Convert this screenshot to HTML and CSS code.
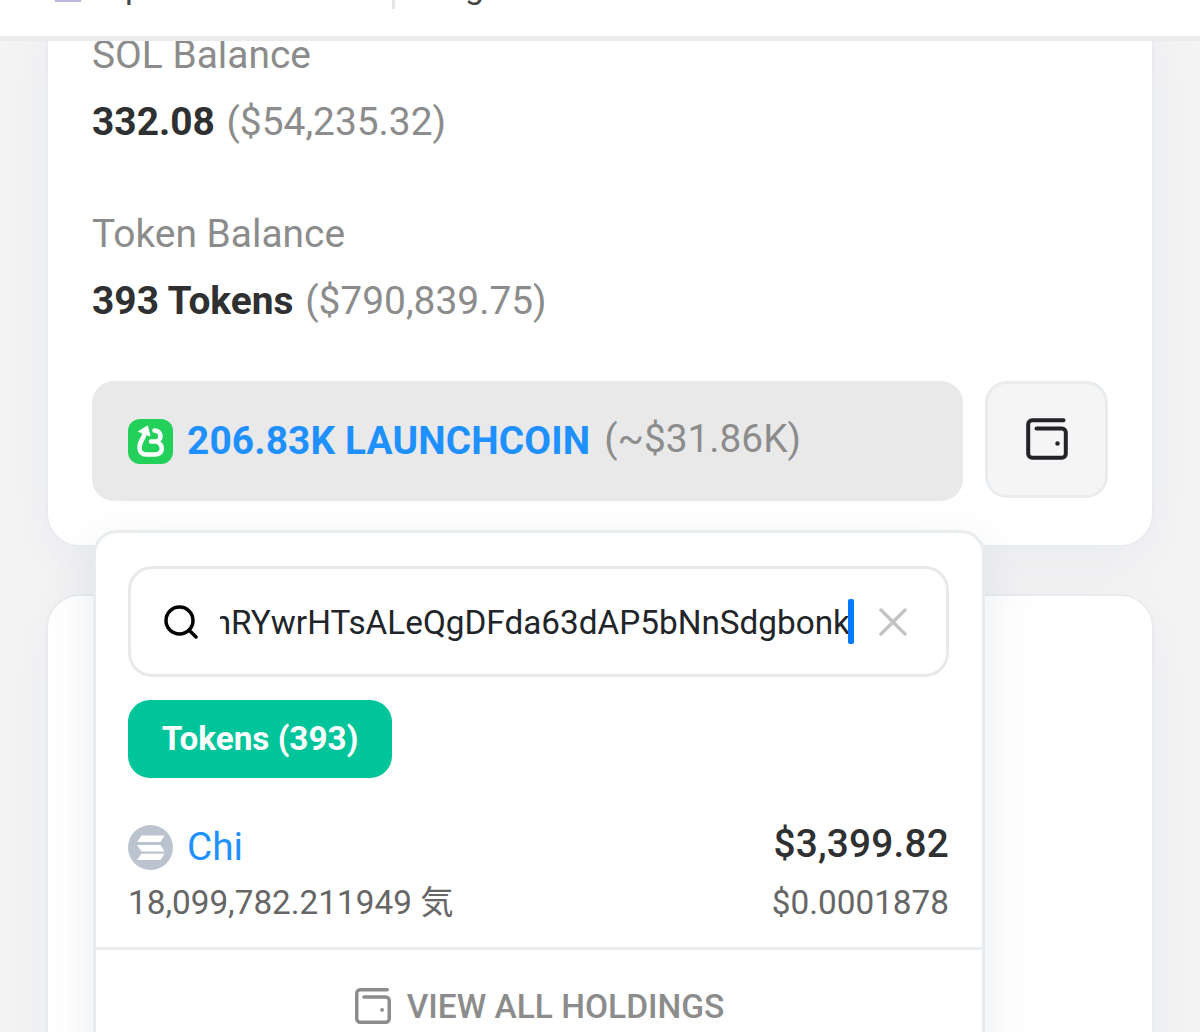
FILE: index.html
```html
<!DOCTYPE html>
<html lang="en">
<head>
    <meta charset="UTF-8">
    <meta name="viewport" content="width=device-width, initial-scale=1.0">
    <title>Account</title>
    <link rel="stylesheet" href="styles.css">
</head>
<body>
    <svg width="0" height="0" class="defs">
        <symbol id="wallet" viewBox="0 0 44 44">
            <path d="M38.5 3.2H7.2a4 4 0 0 0-4 4v29.6a4 4 0 0 0 4 4h29.6a4 4 0 0 0 4-4V15.500a4 4 0 0 0-4-4H11.500" fill="none" stroke="currentColor" stroke-width="4" stroke-linecap="round"/>
            <circle cx="32.500" cy="26.500" r="2.200" fill="currentColor"/>
        </symbol>
    </svg>

    <header class="topbar">
        <span class="topbar-logo"></span>
        <span class="topbar-text">p</span>
        <span class="topbar-line"></span>
        <span class="topbar-text">g</span>
    </header>

    <main class="page">
        <section class="card overview">
            <h4 class="label">SOL Balance</h4>
            <p class="value"><b>332.08</b> <span>($54,235.32)</span></p>
            <h4 class="label">Token Balance</h4>
            <p class="value"><b>393 Tokens</b> <span>($790,839.75)</span></p>

            <div class="holdings">
                <button class="token-select">
                    <svg class="token-logo" viewBox="0 0 45 45">
                        <rect width="45" height="45" rx="12" fill="#22d05a"/>
                        <path d="M16.500 15C16 19 11.500 22 11.500 28.500C11.500 33 14 35.500 18 35.500H27C35.500 35.500 36 26 28.500 22.500H23M28.500 22.500C34.500 21 33.500 11.500 26.500 11.500" fill="none" stroke="#fff" stroke-width="4.6" stroke-linecap="round" stroke-linejoin="round"/>
                        <path d="M10.500 12.500L19.500 7l2.500 10z" fill="#fff" stroke="#fff" stroke-linejoin="round"/>
                    </svg>
                    <b>206.83K LAUNCHCOIN</b>
                    <span>(~$31.86K)</span>
                </button>
                <button class="wallet-btn"><svg class="wallet-icon"><use href="#wallet"/></svg></button>
            </div>

            <div class="dropdown">
                <div class="dropdown-body">
                    <div class="search">
                        <svg class="search-icon" viewBox="0 0 34 34">
                            <circle cx="15.500" cy="15.500" r="13.500"/>
                            <path d="M25 25l7 7"/>
                        </svg>
                        <div class="search-text"><span>nRYwrHTsALeQgDFda63dAP5bNnSdgbonk</span></div>
                        <i class="caret"></i>
                        <svg class="clear-icon" viewBox="0 0 28 28"><path d="M2 2l24 24M26 2L2 26"/></svg>
                    </div>
                    <button class="tab">Tokens (393)</button>
                    <div class="row">
                        <div>
                            <a class="token-name">
                                <svg viewBox="0 0 45 45">
                                    <circle cx="22.500" cy="22.500" r="22.500" fill="#bbc3cf"/>
                                    <path d="M13.500 10.500H36.500l-4 6.500H9zM9 20h23.500l4 6.500H13.500zM13.500 28.800H36.500l-4 6.200H9z" fill="#fff"/>
                                </svg>
                                <span>Chi</span>
                            </a>
                            <div class="amount">18,099,782.211949 気</div>
                        </div>
                        <div class="right">
                            <div class="total">$3,399.82</div>
                            <div class="amount price">$0.0001878</div>
                        </div>
                    </div>
                </div>
                <a class="view-all"><svg><use href="#wallet"/></svg><span>VIEW ALL HOLDINGS</span></a>
            </div>
        </section>

        <section class="card more"></section>
    </main>
</body>
</html>
```
FILE: styles.css
```css
* {
    box-sizing: border-box;
}

body {
    margin: 0;
    height: 1032px;
    overflow: hidden;
    background-color: #f4f4f5;
    color: #2f3031;
    font-family: Roboto, "Noto Sans CJK JP", sans-serif;
}

button {
    font-family: inherit;
    border: none;
}

.defs {
    display: block;
}

/* top bar */
.topbar {
    position: relative;
    z-index: 2;
    display: flex;
    height: 91px;
    margin-top: -50px;
    padding-left: 55px;
    background-color: #fff;
    border-bottom: 5px solid #e9ebed;
}

.topbar-logo {
    width: 26px;
    height: 26px;
    margin: 26px 44px 0 0;
    background-color: #bdb5df;
}

.topbar-text {
    font-size: 34px;
    line-height: 40px;
    padding-top: 16px;
    color: #444;
}

.topbar-line {
    width: 3px;
    height: 50px;
    margin: 9px 70px 0 248px;
    background-color: #e3e5e8;
}

/* cards */
.page {
    padding: 0 46px;
    margin-top: -41px;
}

.card {
    background-color: #fff;
    border: 2px solid #e9ecef;
    border-radius: 34px;
    box-shadow: 0 16px 48px rgba(189, 197, 209, 0.17);
}

.overview {
    position: relative;
    z-index: 1;
    height: 547px;
    padding: 30px 44px 0 44px;
}

.label {
    margin: 0;
    font-size: 38.9px;
    line-height: 46px;
    font-weight: 400;
    color: #8c8c8c;
}

.value {
    margin: 21px 0 66px;
    font-size: 38.9px;
    line-height: 46px;
    white-space: nowrap;
}

.value span {
    margin-left: 2px;
    color: #8c8c8c;
}

.holdings {
    display: flex;
    gap: 22px;
    margin-top: -9.5px;
}

.token-select {
    display: flex;
    align-items: center;
    width: 871px;
    height: 120px;
    padding: 2px 36px 0;
    font-size: 38.8px;
    color: #8c8c8c;
    background-color: #e9e9ea;
    border-radius: 22px;
}

.token-select b {
    margin: 0 14px;
    padding-bottom: 2px;
    letter-spacing: 0.15px;
    color: #1e90ff;
}

.token-select span {
    padding-bottom: 6px;
}

.token-logo {
    width: 45px;
    height: 45px;
}

.wallet-btn {
    display: flex;
    align-items: center;
    justify-content: center;
    width: 123px;
    height: 117px;
    color: #212326;
    background-color: #f5f5f6;
    border: 3px solid #e9ecef;
    border-radius: 22px;
}

.wallet-icon {
    width: 44px;
    height: 44px;
}

.more {
    height: 600px;
    margin-top: 47px;
}

/* holdings dropdown */
.dropdown {
    position: absolute;
    top: 528px;
    left: 45px;
    width: 892px;
    height: 560px;
    background-color: #fff;
    border: 3px solid #e9ecef;
    border-radius: 24px;
    box-shadow: 0 16px 48px rgba(140, 152, 164, 0.18);
}

.dropdown-body {
    height: 417px;
    padding: 33px 33px 0 32px;
    border-bottom: 3px solid #e9ecef;
}

.search {
    display: flex;
    align-items: center;
    height: 111px;
    padding: 0 39px 0 33px;
    border: 3px solid #e9e9e9;
    border-radius: 24px;
}

.search-icon {
    width: 34px;
    height: 34px;
    margin-right: 22px;
    fill: none;
    stroke: #000;
    stroke-width: 3.5;
    stroke-linecap: round;
}

.search-text {
    flex: 1;
    display: flex;
    justify-content: flex-end;
    overflow: hidden;
    padding-top: 3px;
    font-size: 33.3px;
    line-height: 44px;
    white-space: nowrap;
    color: #212529;
}

.caret {
    width: 6px;
    height: 45px;
    margin: 0 25px 0 -2px;
    background-color: #007bff;
    border-radius: 2px;
}

.clear-icon {
    width: 28px;
    height: 28px;
    fill: none;
    stroke: #c4c4c4;
    stroke-width: 3.5;
    stroke-linecap: round;
}

.tab {
    display: block;
    width: 264px;
    height: 78px;
    margin-top: 23px;
    padding-bottom: 3px;
    font-size: 33.3px;
    font-weight: 700;
    color: #fff;
    background-color: #00c49a;
    border-radius: 22px;
}

.row {
    display: flex;
    justify-content: space-between;
    margin-top: 46px;
}

.token-name {
    display: flex;
    align-items: center;
    gap: 14px;
    height: 46px;
    font-size: 38.8px;
    color: #1e90ff;
}

.token-name svg {
    width: 45px;
    height: 45px;
}

.token-name span {
    padding-bottom: 2px;
}

.amount {
    margin-top: 13px;
    font-size: 33.3px;
    line-height: 40px;
    color: #666;
}

.right {
    text-align: right;
}

.total {
    height: 46px;
    font-size: 38.8px;
    line-height: 39px;
    font-weight: 500;
    letter-spacing: 0.2px;
}

.view-all {
    display: flex;
    align-items: center;
    justify-content: center;
    gap: 15px;
    height: 112px;
    font-size: 33.5px;
    font-weight: 500;
    color: #8c8c8c;
}

.view-all svg {
    width: 38px;
    height: 38px;
}
```
